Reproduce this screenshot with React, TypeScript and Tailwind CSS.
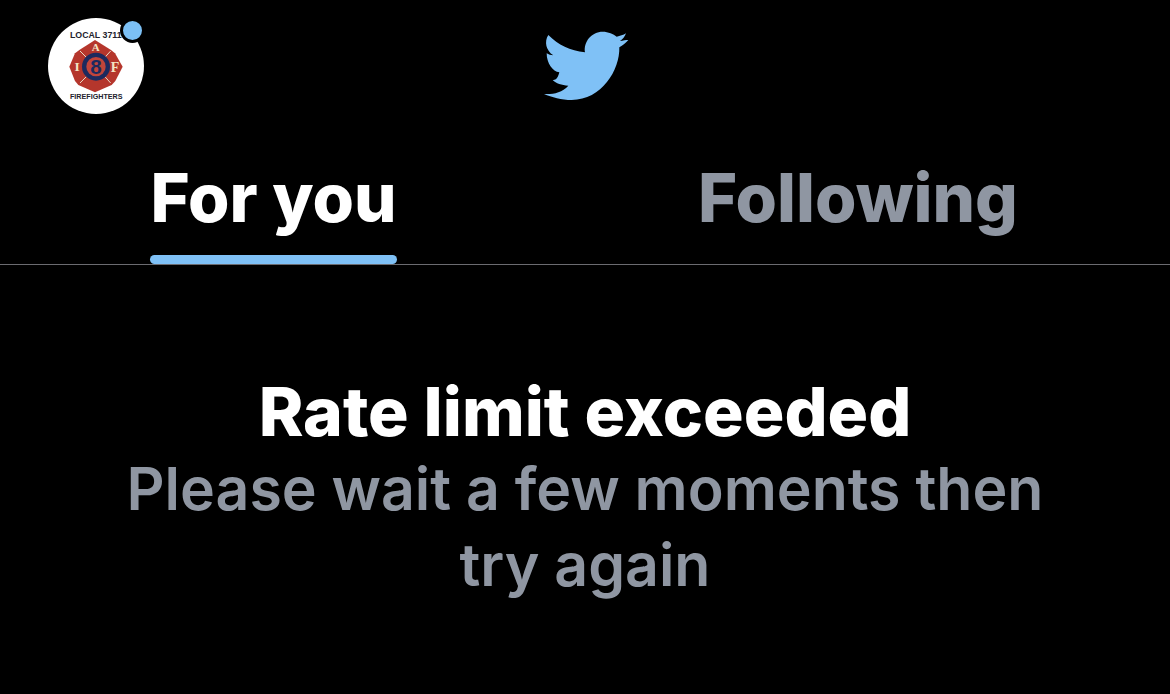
import React from "react";

const Avatar: React.FC = () => {
    return (
        <div className="relative w-[96px] h-[96px] shrink-0">
            <svg viewBox="0 0 96 96" className="w-[96px] h-[96px] block">
                <circle cx="48" cy="48" r="48" fill="#ffffff" />
                <g transform="translate(-18,-13) scale(0.33333)">
                    <text x="120" y="99" fontSize="26.4" fontWeight="700" fill="#22222c" fontFamily="Liberation Sans, sans-serif">LOCAL 3711</text>
                    {/* maltese cross */}
                    <path d="M195 105 L243 135 L255 145 L278 185 L256 228 L245 240 L195 262 L145 240 L135 228 L118 185 L135 145 L148 135 Z" fill="#b5362c" />
                    <path d="M150 138 L172 160 M242 138 L222 160 M150 234 L172 212 M242 234 L222 212" stroke="#eadcc6" strokeWidth="3" />
                    <circle cx="198" cy="185" r="42" fill="#1d2a5e" />
                    <circle cx="198" cy="185" r="29" fill="#c2453a" />
                    <text x="197" y="139" textAnchor="middle" fontSize="33" fontWeight="700" fill="#f3e3c5" fontFamily="Liberation Serif, serif">A</text>
                    <text x="141" y="199" textAnchor="middle" fontSize="40" fontWeight="700" fill="#f3e3c5" fontFamily="Liberation Serif, serif">I</text>
                    <text x="255" y="201" textAnchor="middle" fontSize="42" fontWeight="700" fill="#f3e3c5" fontFamily="Liberation Serif, serif">F</text>
                    <text x="198" y="207" textAnchor="middle" fontSize="62" fontWeight="700" fill="#1d2a5e" fontFamily="Liberation Sans, sans-serif">8</text>
                    <text x="120" y="283" fontSize="21.5" fontWeight="700" fill="#22222c" fontFamily="Liberation Sans, sans-serif">FIREFIGHTERS</text>
                </g>
            </svg>
            <div className="absolute left-[72px] top-[0px] w-[19px] h-[19px] rounded-full bg-[#7cc0f5] border-[3px] border-black box-content"></div>
        </div>
    );
};

const Bird: React.FC = () => {
    return (
        <svg viewBox="0 0 330 270" className="w-[110px] h-[90px] block" fill="#7fc1f6">
            <path d="M55 45 C85 75 120 92 165 97 C160 65 185 35 218 35 C235 35 250 42 260 50 C270 48 280 45 288 40 C285 50 278 58 270 63 C279 62 288 60 295 60 C288 68 278 76 268 82 C270 150 215 240 125 240 C95 240 65 232 42 222 C68 224 95 218 115 197 C95 196 78 190 68 180 C75 180 82 180 88 157 C68 155 50 130 50 100 C56 104 62 106 70 106 C48 92 42 65 55 45 Z" />
        </svg>
    );
};

const App: React.FC = () => {
    return (
        <div className="w-[1170px] h-[694px] overflow-hidden bg-black font-['Inter',sans-serif]">
            {/* top bar */}
            <div className="flex items-start pl-[48px] pt-[18px] h-[160px]">
                <Avatar />
                <div className="ml-[386px] mt-[2px]"><Bird /></div>
            </div>
            {/* tabs */}
            <div className="flex h-[105px] border-b border-[#6b6b70] pl-[150px]">
                <div className="w-[247px] relative flex justify-center">
                    <span className="text-[67px] leading-[76px] font-extrabold text-white">For you</span>
                    <div className="absolute left-0 right-0 bottom-0 h-[9px] rounded-[5px] bg-[#7fc1f6]"></div>
                </div>
                <div className="ml-[301px]">
                    <span className="text-[67px] leading-[76px] font-extrabold text-[#8f96a2]">Following</span>
                </div>
            </div>
            {/* message */}
            <div className="flex flex-col items-center pt-[108px] text-center">
                <div className="text-[67.7px] leading-[76px] font-extrabold text-white mb-[2px]">Rate limit exceeded</div>
                <div className="w-[960px] text-[59px] leading-[76px] font-[560] text-[#8f96a2]">Please wait a few moments then try again</div>
            </div>
        </div>
    );
};

export default App;
